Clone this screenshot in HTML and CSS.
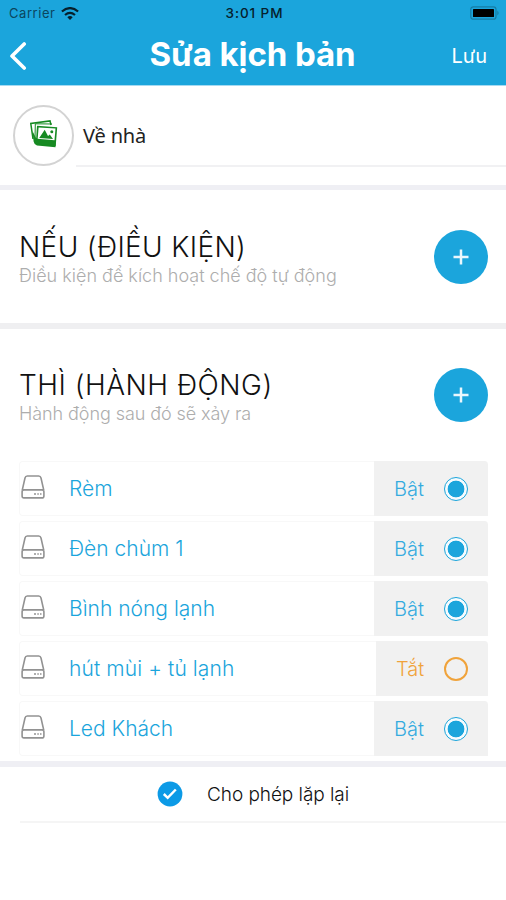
FILE: index.html
```html
<!DOCTYPE html>
<html lang="vi">
<head>
<meta charset="utf-8">
<title>Sửa kịch bản</title>
<link rel="stylesheet" href="styles.css">
</head>
<body>
<svg class="defs" width="0" height="0">
  <symbol id="drive" viewBox="0 0 24 24">
    <path d="M1.200 15.400 4 3Q4.500 1 6.300 1H17.700Q19.500 1 20 3L22.800 15.400M3 14.900H21Q22.900 14.900 22.900 16.800V20.900Q22.900 22.900 21 22.900H3Q1.100 22.900 1.100 20.900V16.800Q1.100 14.900 3 14.900Z" fill="none" stroke="#929292" stroke-width="1.600"/>
    <path d="M13 19h2M16.300 19h1.500M19 19h1.500" stroke="#929292" stroke-width="1.500"/>
  </symbol>
  <symbol id="plus" viewBox="0 0 16 16"><path d="M8 .5v15M.5 8h15" stroke="#e9f7fd" stroke-width="2.500"/></symbol>
</svg>
<header class="header">
  <div class="status">
    <div class="carrier"><span>Carrier</span>
      <svg width="18" height="13" viewBox="0 0 18 13"><g fill="none" stroke="#06202c" stroke-width="2.200"><path d="M.9 4.500Q9-2.300 17.100 4.500"/><path d="M4 8Q9 3.700 14 8"/></g><path d="M6.300 10.200Q9 8 11.700 10.200L9 12.900Z" fill="#06202c"/></svg>
    </div>
    <div class="time">3:01 PM</div>
    <svg class="battery" width="30" height="14" viewBox="0 0 30 14"><rect x=".8" y=".8" width="25.200" height="12.400" rx="2.500" fill="none" stroke="#167da5" stroke-width="1.200"/><rect x="3" y="3" width="21" height="8" rx=".6" fill="#000"/><path d="M27.300 4.500Q30 7 27.300 9.500Z" fill="#167da5"/></svg>
  </div>
  <div class="nav">
    <svg class="back" width="18" height="28" viewBox="0 0 18 28"><path d="M15.200 2 3 14 15.200 26" fill="none" stroke="#fff" stroke-width="3.600" stroke-linecap="round" stroke-linejoin="round"/></svg>
    <h1>Sửa kịch bản</h1>
    <span class="save">Lưu</span>
  </div>
</header>
<section class="profile">
  <div class="avatar">
    <svg width="28" height="28" viewBox="0 0 28 28"><path d="M3 19 .8 3.500 20 .9 21 5" fill="none" stroke="#168a22" stroke-width="1.500"/><path d="M5 19 5.300 3.800 22 4" fill="none" stroke="#168a22" stroke-width="1"/><path d="M2.500 11 3.600 21.500Q4.200 24.800 7 25.500L25.500 27.200 25.800 21 6 18Z" fill="#168a22"/><path d="M7 5.800 27.200 7.200 25.700 26 5.800 23.500Z" fill="#168a22"/><path d="M8.600 7.500 25.500 8.600 24.500 20.300 7.700 18.800Z" fill="#fff"/><path d="M9.200 18.100 14.700 9.800 18 16 19.800 14.500 23 19Z" fill="#168a22"/><circle cx="21.800" cy="11.800" r="1.500" fill="#168a22"/></svg>
  </div>
  <div class="name">Về nhà</div>
</section>
<section class="head cond">
  <div><h2 class="t1">NẾU (ĐIỀU KIỆN)</h2><p class="p1">Điều kiện để kích hoạt chế độ tự động</p></div>
  <div class="add"><svg width="16" height="16"><use href="#plus"/></svg></div>
</section>
<section class="head act">
  <div><h2 class="t2">THÌ (HÀNH ĐỘNG)</h2><p class="p2">Hành động sau đó sẽ xảy ra</p></div>
  <div class="add"><svg width="16" height="16"><use href="#plus"/></svg></div>
</section>
<div class="rows">
  <div class="row"><svg class="drive"><use href="#drive"/></svg><span class="label">Rèm</span><div class="state"><span>Bật</span><i class="radio"></i></div></div>
  <div class="row"><svg class="drive"><use href="#drive"/></svg><span class="label">Đèn chùm 1</span><div class="state"><span>Bật</span><i class="radio"></i></div></div>
  <div class="row"><svg class="drive"><use href="#drive"/></svg><span class="label">Bình nóng lạnh</span><div class="state"><span>Bật</span><i class="radio"></i></div></div>
  <div class="row"><svg class="drive"><use href="#drive"/></svg><span class="label wide">hút mùi + tủ lạnh</span><div class="state off"><span>Tắt</span><i class="radio"></i></div></div>
  <div class="row"><svg class="drive"><use href="#drive"/></svg><span class="label">Led Khách</span><div class="state"><span>Bật</span><i class="radio"></i></div></div>
</div>
<footer class="repeat">
  <svg width="26" height="26" viewBox="0 0 26 26"><circle cx="13" cy="13" r="12.400" fill="#0c9ae6"/><path d="M6.800 13 10.700 16.800 18.800 8.500" fill="none" stroke="#fff" stroke-width="2.500"/></svg>
  <span>Cho phép lặp lại</span>
</footer>
</body>
</html>
```
FILE: styles.css
```css
* { box-sizing: border-box; }
body { margin: 0; width: 506px; height: 900px; background: #fff; font-family: Inter, "Liberation Sans", sans-serif; overflow: hidden; }
.defs { display: block; height: 0; }
h1, h2, p { margin: 0; font-weight: 400; white-space: nowrap; }
.header { height: 86px; background: #1ba5dc; border-bottom: 1px solid #a5daf2; }
.status { height: 26px; display: grid; grid-template-columns: 1fr auto 1fr; align-items: center; padding: 0 6px 0 9px; color: #06202c; font-size: 13px; line-height: 26px; }
.carrier { display: flex; align-items: center; gap: 6px; letter-spacing: .55px; color: #0b465e; }
.time { font-size: 13.5px; font-weight: 500; letter-spacing: .9px; }
.battery { justify-self: end; }
.nav { height: 59px; display: grid; grid-template-columns: 1fr auto 1fr; align-items: center; padding: 0 19px 0 9px; color: #fff; }
.nav h1 { font-size: 33px; font-weight: 700; line-height: 56px; letter-spacing: -.1px; padding: 0 0 3px 9px; }
.save { justify-self: end; font-size: 20px; }
.profile { height: 104px; border-bottom: 5px solid #efeff4; display: flex; }
.avatar { width: 61px; height: 61px; margin: 19px 2px 0 13px; border: 2px solid #d3d3d3; border-radius: 50%; display: flex; align-items: center; justify-content: center; padding-bottom: 3px; }
.name { flex: 1; height: 81px; border-bottom: 2px solid #f1f1f3; padding: 34px 0 0 7px; font: 20px/32px "Noto Sans", sans-serif; letter-spacing: -.15px; color: #222; }
.head { display: flex; justify-content: space-between; padding: 40px 18px 0 19px; }
.cond { height: 139px; border-bottom: 6px solid #efeff1; }
.act { height: 132px; padding-top: 39px; }
.head h2 { font-size: 28px; font-weight: 300; line-height: 34px; letter-spacing: .35px; color: #111; }
.head .t2 { letter-spacing: .5px; }
.head p { font-size: 18px; font-weight: 300; line-height: 24px; color: #adadad; }
.head .p2 { letter-spacing: -.08px; }
.add { width: 54px; height: 54px; border-radius: 50%; background: #1ba5dc; display: flex; align-items: center; justify-content: center; }
.rows { display: grid; gap: 5px; padding: 0 18px 5px 19px; border-bottom: 6px solid #efeff4; }
.row { height: 55px; display: flex; align-items: center; border: 1px solid #f8f8f8; border-right: 0; border-radius: 4px; }
.drive { width: 24px; height: 24px; margin: 0 24px 4px 1px; }
.label { flex: 1; font-size: 21px; font-weight: 300; color: #1ba5dc; white-space: nowrap; }
.wide { letter-spacing: .1px; }
.state { align-self: stretch; margin: -1px 0; width: 114px; background: #f1f1f1; border-radius: 0 4px 0 0; display: flex; align-items: center; justify-content: space-between; padding: 0 20px; font-size: 20px; font-weight: 300; color: #35abdf; }
.radio { width: 24px; height: 24px; border: 1.5px solid #1ba5dc; border-radius: 50%; background: radial-gradient(circle, #1ba5dc 8px, #f5fbfe 8.700px); }
.off { width: 112px; color: #f0a33b; }
.off .radio { border-color: #f0a33b; border-width: 2px; background: none; }
.repeat { margin-left: 20px; height: 56px; border-bottom: 2px solid #f5f5f5; display: flex; align-items: center; gap: 24px; padding-left: 137px; font-size: 19px; font-weight: 300; letter-spacing: -.06px; color: #111; }
```
